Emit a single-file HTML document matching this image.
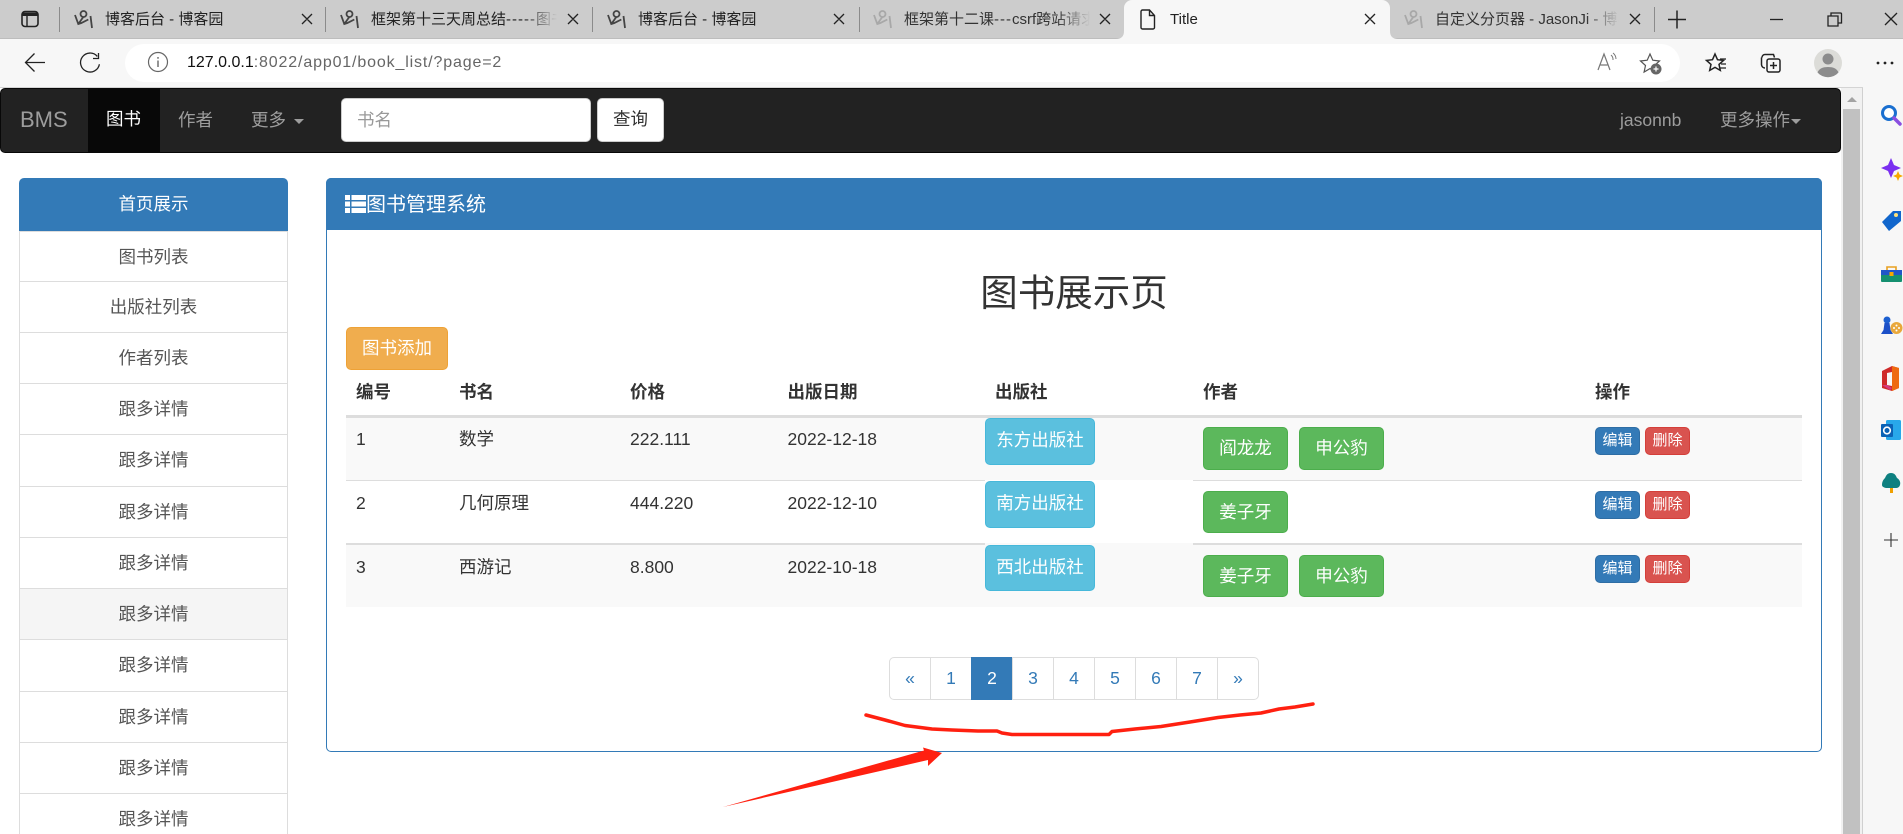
<!DOCTYPE html>
<html lang="zh"><head><meta charset="utf-8"><title>Title</title>
<style>
*{box-sizing:border-box}
html,body{margin:0;padding:0;width:1903px;height:834px;overflow:hidden;background:#fff}
body{position:relative;font-family:"Liberation Sans","Noto Sans CJK SC",sans-serif;font-size:17.5px;color:#333}
.a{position:absolute;white-space:nowrap}
.t{position:absolute;top:9px;height:22px;line-height:22px;font-size:15px;color:#222;overflow:hidden;white-space:nowrap;width:170px}
.t.f{-webkit-mask-image:linear-gradient(90deg,#000 82%,transparent 100%);mask-image:linear-gradient(90deg,#000 82%,transparent 100%)}
.sep{position:absolute;top:7px;height:25px;width:1px;background:#8b8b8b}
svg{position:absolute;overflow:visible}
.li{position:absolute;left:19px;width:269px;border:1.25px solid #ddd;background:#fff;text-align:center;line-height:50px;color:#555}
.btn{position:absolute;text-align:center;color:#fff;border-radius:5px;border:1.25px solid;white-space:nowrap}
.inf{background:#5bc0de;border-color:#46b8da;left:985px;width:110px;line-height:42px}
.suc{background:#5cb85c;border-color:#4cae4c;width:85px;line-height:40px}
.pri{background:#337ab7;border-color:#2e6da4;left:1595px;width:45px;height:28px;font-size:15px;line-height:26px}
.dan{background:#d9534f;border-color:#d43f3a;left:1645px;width:45px;height:28px;font-size:15px;line-height:26px}
.pg{position:absolute;top:657px;height:43px;border:1.25px solid #ddd;background:#fff;color:#337ab7;text-align:center;line-height:41px;margin-left:-1px}
.th{position:absolute;top:380px;line-height:24px;font-weight:700;white-space:nowrap}
.td{position:absolute;line-height:24px;white-space:nowrap}
.hy{letter-spacing:1px}
</style></head><body>

<!-- tab strip -->
<div class="a" style="left:0;top:0;width:1903px;height:39px;background:#ccc"></div>
<div class="a" style="left:0;top:38px;width:1903px;height:1px;background:#bdbdbd"></div>
<div class="a" style="left:1124px;top:0;width:266px;height:39px;background:#f7f7f7;border-radius:8px 8px 0 0"></div>
<svg style="left:0;top:0" width="1903" height="39" viewBox="0 0 1903 39"><path d="M1116 39Q1124 39 1124 31V39ZM1398 39Q1390 39 1390 31V39Z" fill="#f7f7f7"/></svg>

<svg style="left:21px;top:10px" width="18" height="18" viewBox="0 0 18 18"><rect x="1" y="1.500" width="16" height="15" rx="3" fill="none" stroke="#222" stroke-width="1.600"/><path d="M1 2.500h16V6H1z" fill="#222"/><path d="M6 6v10" stroke="#222" stroke-width="1.400"/></svg>
<div class="sep" style="left:59px"></div><div class="sep" style="left:325px"></div><div class="sep" style="left:592px"></div><div class="sep" style="left:859px"></div><div class="sep" style="left:1654px"></div>

<svg style="left:74px;top:11px" width="19" height="18" viewBox="0 0 19 18"><g fill="none" stroke="#444" stroke-width="1.800"><circle cx="9.500" cy="3" r="3"/><path d="M1 4l3.300 9 3-1 7-3.500M16.500 5l1.500 12M4.300 13l5-7"/></g></svg>
<svg style="left:340px;top:11px" width="19" height="18" viewBox="0 0 19 18"><g fill="none" stroke="#444" stroke-width="1.800"><circle cx="9.500" cy="3" r="3"/><path d="M1 4l3.300 9 3-1 7-3.500M16.500 5l1.500 12M4.300 13l5-7"/></g></svg>
<svg style="left:607px;top:11px" width="19" height="18" viewBox="0 0 19 18"><g fill="none" stroke="#444" stroke-width="1.800"><circle cx="9.500" cy="3" r="3"/><path d="M1 4l3.300 9 3-1 7-3.500M16.500 5l1.500 12M4.300 13l5-7"/></g></svg>
<svg style="left:873px;top:11px" width="19" height="18" viewBox="0 0 19 18"><g fill="none" stroke="#a8a8a8" stroke-width="1.800"><circle cx="9.500" cy="3" r="3"/><path d="M1 4l3.300 9 3-1 7-3.500M16.500 5l1.500 12M4.300 13l5-7"/></g></svg>
<svg style="left:1404px;top:11px" width="19" height="18" viewBox="0 0 19 18"><g fill="none" stroke="#a8a8a8" stroke-width="1.800"><circle cx="9.500" cy="3" r="3"/><path d="M1 4l3.300 9 3-1 7-3.500M16.500 5l1.500 12M4.300 13l5-7"/></g></svg>
<svg style="left:1140px;top:9px" width="16" height="21" viewBox="0 0 16 21"><path d="M2.500 1h7l5 5.500V18.500a1.500 1.500 0 0 1-1.500 1.500h-10.500a1.500 1.500 0 0 1-1.500-1.500V2.500a1.500 1.500 0 0 1 1.500-1.500zM9.500 1v5.500h5" fill="none" stroke="#222" stroke-width="1.400"/></svg>

<div class="t" style="left:105px">博客后台 - 博客园</div>
<div class="t f" style="left:371px;width:186px">框架第十三天周总结<span class="hy">-----</span>图书管理系统</div>
<div class="t" style="left:638px">博客后台 - 博客园</div>
<div class="t f" style="left:904px;width:186px;color:#333">框架第十二课<span class="hy">---</span>csrf跨站请求伪造</div>
<div class="t" style="left:1170px">Title</div>
<div class="t f" style="left:1435px;width:184px;color:#333">自定义分页器 - JasonJi - 博客园</div>

<svg style="left:0;top:0" width="1903" height="39" viewBox="0 0 1903 39"><g stroke="#222" stroke-width="1.300" fill="none">
<path d="M302 14l10 10M312 14l-10 10M568 14l10 10M578 14l-10 10M834 14l10 10M844 14l-10 10M1100 14l10 10M1110 14l-10 10M1365 14l10 10M1375 14l-10 10M1630 14l10 10M1640 14l-10 10"/>
<path d="M1668 19.500h18M1677 10.500v18" stroke-width="1.500"/>
<path d="M1770 19.500h13"/>
<path d="M1828 16h10v10h-10zM1831 16v-3h9.500a1 1 0 0 1 1 1v9h-3.500" />
<path d="M1885 13l12 12M1897 13l-12 12"/></g></svg>

<!-- toolbar -->
<div class="a" style="left:0;top:39px;width:1903px;height:49px;background:#f7f7f7"></div>
<div class="a" style="left:125px;top:44px;width:1555px;height:38px;background:#fff;border-radius:19px"></div>
<div class="a" style="left:187px;top:52px;line-height:22px;font-size:16px;color:#111">127.0.0.1<span style="color:#666;letter-spacing:.85px">:8022/app01/book_list/?page=2</span></div>
<svg style="left:0;top:39px" width="1903" height="49" viewBox="0 39 1903 49"><g fill="none" stroke="#222" stroke-width="1.500">
<path d="M26 62.500h19M34.500 53.500L25.500 62.500l9 9" stroke-width="1.300"/>
<path d="M97.300 56.400A9.500 9.500 0 1 0 99.400 64.200M98.500 53v5.500H93" stroke-width="1.300"/>
<circle cx="158" cy="62" r="9.500" stroke="#666" stroke-width="1.200"/><path d="M158 60.500v6.500M158 57v1.800" stroke="#666" stroke-width="1.400"/>
<path d="M1598 70l6-16 6 16M1600.500 65h7" stroke="#777" stroke-width="1.200"/><path d="M1611 55a6 6 0 0 1 2 5M1613 53a8 8 0 0 1 3 6" stroke="#777" stroke-width="1"/>
<path d="M1650 54l2.800 6.200 6.700.8-5 4.500 1.400 6.500-5.900-3.400-5.900 3.400 1.400-6.500-5-4.500 6.700-.8z" stroke="#555" stroke-width="1.200"/>
<path d="M1715 54l2.500 5.700 6 .7-4.500 4 1.300 6-5.300-3-5.300 3 1.300-6-4.500-4 6-.7z" stroke-width="1.500"/><path d="M1720 59h6M1721 64h5M1720 68h6" stroke-width="1.300"/>
<path d="M1762 57.500a3 3 0 0 1 3-3h8.500l1 3M1765 68c-2 0-3.500-1.500-3.500-3.500v-7"/><rect x="1767" y="59" width="13" height="13" rx="2"/><path d="M1773.500 62v7M1770 65.500h7"/>
</g>
<circle cx="1656" cy="69" r="5.500" fill="#666"/><path d="M1656 66.500v5M1653.500 69h5" stroke="#fff" stroke-width="1.200"/>
<circle cx="1828" cy="63" r="14" fill="#dcdcd8"/><circle cx="1828" cy="59" r="5.500" fill="#8c8c8c"/><path d="M1817.500 72.500c1.500-4 5.500-5.500 10.500-5.500s9 1.500 10.500 5.500a14 14 0 0 1-21 0z" fill="#8c8c8c"/>
<circle cx="1878" cy="63" r="1.400" fill="#222"/><circle cx="1885" cy="63" r="1.400" fill="#222"/><circle cx="1892" cy="63" r="1.400" fill="#222"/>
</svg>
<div class="a" style="left:0;top:87px;width:1863px;height:1px;background:#d4d4d4"></div>

<!-- navbar -->
<div class="a" style="left:0;top:88px;width:1841px;height:65px;background:#222;border:1.25px solid #080808;border-radius:5px"></div>
<div class="a" style="left:88px;top:89px;width:72px;height:63px;background:#080808"></div>
<div class="a" style="left:20px;top:105px;font-size:22px;line-height:30px;color:#9d9d9d">BMS</div>
<div class="a" style="left:106px;top:106px;line-height:26px;color:#fff">图书</div>
<div class="a" style="left:178px;top:107px;line-height:26px;color:#9d9d9d">作者</div>
<div class="a" style="left:251px;top:107px;line-height:26px;color:#9d9d9d">更多</div>
<div class="a" style="left:294px;top:119px;border-top:5px solid #9d9d9d;border-left:5px solid transparent;border-right:5px solid transparent"></div>
<div class="a" style="left:341px;top:98px;width:250px;height:44px;background:#fff;border:1.25px solid #ccc;border-radius:5px;padding-left:15px;line-height:42px;color:#999">书名</div>
<div class="a" style="left:597px;top:98px;width:67px;height:44px;background:#fff;border:1.25px solid #ccc;border-radius:5px;text-align:center;line-height:41px;color:#333">查询</div>
<div class="a" style="left:1620px;top:107px;line-height:26px;color:#9d9d9d">jasonnb</div>
<div class="a" style="left:1720px;top:107px;line-height:26px;color:#9d9d9d">更多操作</div>
<div class="a" style="left:1791px;top:119px;border-top:5px solid #9d9d9d;border-left:5px solid transparent;border-right:5px solid transparent"></div>

<!-- scrollbar -->
<div class="a" style="left:1841px;top:88px;width:22px;height:746px;background:#f1f1f1"></div>
<div class="a" style="left:1843px;top:109px;width:17px;height:725px;background:#c1c1c1"></div>
<div class="a" style="left:1847px;top:97px;border-bottom:5px solid #a3a3a3;border-left:5px solid transparent;border-right:5px solid transparent"></div>

<!-- edge sidebar -->
<div class="a" style="left:1862px;top:88px;width:1px;height:746px;background:#d0d0d0"></div>
<div class="a" style="left:1863px;top:88px;width:40px;height:746px;background:#f7f7f7"></div>
<svg style="left:1863px;top:88px" width="40" height="746" viewBox="1863 88 40 746">
<circle cx="1889" cy="113" r="6.500" fill="#fff" stroke="#1a6fd0" stroke-width="3"/><path d="M1894 118l6 6" stroke="#8a4fe0" stroke-width="3.500" stroke-linecap="round"/>
<path d="M1891 158l3 7 7 3-7 3-3 7-3-7-7-3 7-3z" fill="#7a2ff0"/><path d="M1898 171l1.500 3.500 3.500 1.500-3.500 1.500-1.500 3.500-1.500-3.500-3.500-1.500 3.500-1.500z" fill="#f7a800"/>
<path d="M1882 222l11-11h8v10l-12 10z" fill="#1166cc"/><circle cx="1896" cy="215" r="2" fill="#ffe27a"/>
<rect x="1881" y="270" width="21" height="12" rx="1" fill="#159070"/><rect x="1881" y="270" width="21" height="5" fill="#2056c8"/><path d="M1887 270v-3h9v3" fill="none" stroke="#e8a020" stroke-width="1.600"/><rect x="1889.500" y="272" width="4" height="4" fill="#f5a800"/>
<circle cx="1887" cy="320" r="3.500" fill="#1c5fd0"/><path d="M1884.500 323h5l1 7 2.500 4h-12l2.500-4z" fill="#1c50c8"/><circle cx="1896.500" cy="328" r="6" fill="#e9a83c"/><circle cx="1894" cy="328" r="1" fill="#fff"/><circle cx="1899" cy="328" r="1" fill="#fff"/><circle cx="1896.500" cy="325.500" r="1" fill="#fff"/><circle cx="1896.500" cy="330.500" r="1" fill="#fff"/>
<path d="M1882 371l10-5 7 2v20l-7 3-10-3z" fill="#cf2a2a"/><path d="M1892 366l7 2v20l-7 3z" fill="#ee6a10"/><path d="M1887 373l5-1v14l-5-1z" fill="#f7f7f7"/><path d="M1882 385l5 0 5 3-2 2z" fill="#d63a80"/>
<rect x="1886" y="420" width="15" height="20" rx="1.500" fill="#28a8ea"/><rect x="1881" y="424" width="12" height="13" rx="1" fill="#0b62b5"/><circle cx="1887" cy="430.500" r="3.300" fill="none" stroke="#fff" stroke-width="1.600"/>
<path d="M1891 473c4 0 5 3 6 5 2 1 4 4 3 7-1 3-3 3-5 3h-8c-2 0-5-1-5-3 0-3 1-5 3-7 1-2 2-5 6-5z" fill="#0e8080"/><path d="M1890 488h3v5h-3z" fill="#f0a000"/>
<path d="M1884 540h14M1891 533v14" stroke="#333" stroke-width="1.100" fill="none"/>
</svg>

<!-- left menu -->
<div class="li" style="top:231px;height:51px">图书列表</div>
<div class="li" style="top:281px;height:52px">出版社列表</div>
<div class="li" style="top:332px;height:52px">作者列表</div>
<div class="li" style="top:383px;height:52px">跟多详情</div>
<div class="li" style="top:434px;height:53px">跟多详情</div>
<div class="li" style="top:486px;height:52px">跟多详情</div>
<div class="li" style="top:537px;height:52px">跟多详情</div>
<div class="li" style="top:588px;height:52px;background:#f5f5f5">跟多详情</div>
<div class="li" style="top:639px;height:53px">跟多详情</div>
<div class="li" style="top:691px;height:52px">跟多详情</div>
<div class="li" style="top:742px;height:52px">跟多详情</div>
<div class="li" style="top:793px;height:52px">跟多详情</div>
<div class="a" style="left:19px;top:178px;width:269px;height:53px;background:#337ab7;color:#fff;text-align:center;line-height:52px;border-radius:5px 5px 0 0">首页展示</div>

<!-- panel -->
<div class="a" style="left:326px;top:178px;width:1496px;height:574px;border:1.25px solid #337ab7;border-radius:5px;background:#fff"></div>
<div class="a" style="left:326px;top:178px;width:1496px;height:52px;background:#337ab7;border-radius:5px 5px 0 0"></div>
<svg style="left:345px;top:195px" width="21" height="18" viewBox="0 0 21 18"><path d="M0 0h5v5H0zM6.500 0H21v5H6.500zM0 6.500h5v5H0zM6.500 6.500H21v5H6.500zM0 13h5v5H0zM6.500 13H21v5H6.500z" fill="#fff"/></svg>
<div class="a" style="left:366px;top:191px;font-size:20px;line-height:28px;color:#fff">图书管理系统</div>
<div class="a" style="left:326px;width:1496px;top:266px;text-align:center;font-size:37.5px;line-height:54px;color:#333">图书展示页</div>
<div class="btn" style="left:346px;top:327px;width:102px;height:43px;background:#f0ad4e;border-color:#eea236;line-height:41px">图书添加</div>

<!-- table -->
<div class="a" style="left:346px;top:417px;width:1456px;height:63px;background:#f9f9f9"></div>
<div class="a" style="left:346px;top:543px;width:1456px;height:64px;background:#f9f9f9"></div>
<div class="a" style="left:346px;top:415px;width:1456px;height:2.500px;background:#ddd"></div>
<div class="a" style="left:346px;top:479.500px;width:639px;height:1.250px;background:#ddd"></div>
<div class="a" style="left:1193px;top:479.500px;width:609px;height:1.250px;background:#ddd"></div>
<div class="a" style="left:346px;top:543px;width:639px;height:2px;background:#ddd"></div>
<div class="a" style="left:1193px;top:543px;width:609px;height:2px;background:#ddd"></div>

<div class="th" style="left:356px">编号</div><div class="th" style="left:459px">书名</div><div class="th" style="left:630px">价格</div><div class="th" style="left:787.500px">出版日期</div><div class="th" style="left:995px">出版社</div><div class="th" style="left:1203px">作者</div><div class="th" style="left:1595px">操作</div>

<div class="td" style="left:356px;top:427px">1</div><div class="td" style="left:459px;top:427px">数学</div><div class="td" style="left:630px;top:427px">222.111</div><div class="td" style="left:787.500px;top:427px">2022-12-18</div>
<div class="td" style="left:356px;top:491px">2</div><div class="td" style="left:459px;top:491px">几何原理</div><div class="td" style="left:630px;top:491px">444.220</div><div class="td" style="left:787.500px;top:491px">2022-12-10</div>
<div class="td" style="left:356px;top:555px">3</div><div class="td" style="left:459px;top:555px">西游记</div><div class="td" style="left:630px;top:555px">8.800</div><div class="td" style="left:787.500px;top:555px">2022-10-18</div>

<div class="btn inf" style="top:418px;height:47px">东方出版社</div>
<div class="btn inf" style="top:481px;height:47px">南方出版社</div>
<div class="btn inf" style="top:545px;height:46px">西北出版社</div>
<div class="btn suc" style="left:1203px;top:427px;height:43px">阎龙龙</div>
<div class="btn suc" style="left:1299px;top:427px;height:43px">申公豹</div>
<div class="btn suc" style="left:1203px;top:491px;height:42px">姜子牙</div>
<div class="btn suc" style="left:1203px;top:555px;height:42px">姜子牙</div>
<div class="btn suc" style="left:1299px;top:555px;height:42px">申公豹</div>
<div class="btn pri" style="top:427px">编辑</div><div class="btn dan" style="top:427px">删除</div>
<div class="btn pri" style="top:491px">编辑</div><div class="btn dan" style="top:491px">删除</div>
<div class="btn pri" style="top:555px">编辑</div><div class="btn dan" style="top:555px">删除</div>

<!-- pagination -->
<div class="pg" style="left:890px;width:42px;border-radius:5px 0 0 5px">«</div>
<div class="pg" style="left:931px;width:42px">1</div>
<div class="pg" style="left:972px;width:42px;background:#337ab7;border-color:#337ab7;color:#fff">2</div>
<div class="pg" style="left:1013px;width:42px">3</div>
<div class="pg" style="left:1054px;width:42px">4</div>
<div class="pg" style="left:1095px;width:42px">5</div>
<div class="pg" style="left:1136px;width:42px">6</div>
<div class="pg" style="left:1177px;width:42px">7</div>
<div class="pg" style="left:1218px;width:42px;border-radius:0 5px 5px 0">»</div>

<!-- annotations -->
<svg style="left:0;top:0" width="1903" height="834" viewBox="0 0 1903 834">
<path d="M866 715L885 720L905 725.500L932 729L952 730L978 731L997 731L1002 733L1012 734.500L1109 734.500L1112 731.500L1135 729L1161 726.500L1190 722L1218 717.500L1240 715L1261 713L1279 709L1295 707L1313 704" fill="none" stroke="#ff2010" stroke-width="3.500" stroke-linecap="round" stroke-linejoin="round"/>
<path d="M723 807L924 750.500L923 747.500L942 753L928 766L928 760Z" fill="#ff2010"/>
</svg>
</body></html>
